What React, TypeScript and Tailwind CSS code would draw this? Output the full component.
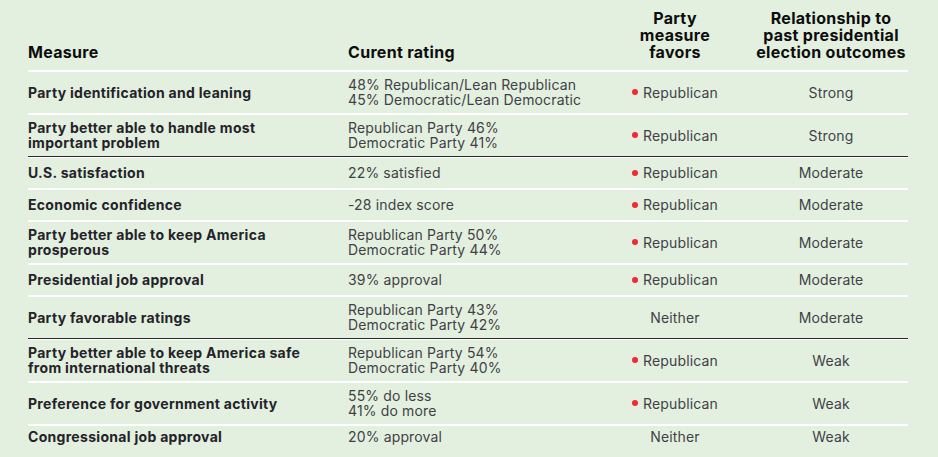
import React from "react";

type Row = {
  measure: string[];
  rating: string[];
  favors: "Republican" | "Neither";
  relation: string;
  divider?: boolean;
};

const rows: Row[] = [
  {
    measure: ["Party identification and leaning"],
    rating: ["48% Republican/Lean Republican", "45% Democratic/Lean Democratic"],
    favors: "Republican",
    relation: "Strong",
  },
  {
    measure: ["Party better able to handle most", "important problem"],
    rating: ["Republican Party 46%", "Democratic Party 41%"],
    favors: "Republican",
    relation: "Strong",
    divider: true,
  },
  {
    measure: ["U.S. satisfaction"],
    rating: ["22% satisfied"],
    favors: "Republican",
    relation: "Moderate",
  },
  {
    measure: ["Economic confidence"],
    rating: ["-28 index score"],
    favors: "Republican",
    relation: "Moderate",
  },
  {
    measure: ["Party better able to keep America", "prosperous"],
    rating: ["Republican Party 50%", "Democratic Party 44%"],
    favors: "Republican",
    relation: "Moderate",
  },
  {
    measure: ["Presidential job approval"],
    rating: ["39% approval"],
    favors: "Republican",
    relation: "Moderate",
  },
  {
    measure: ["Party favorable ratings"],
    rating: ["Republican Party 43%", "Democratic Party 42%"],
    favors: "Neither",
    relation: "Moderate",
    divider: true,
  },
  {
    measure: ["Party better able to keep America safe", "from international threats"],
    rating: ["Republican Party 54%", "Democratic Party 40%"],
    favors: "Republican",
    relation: "Weak",
  },
  {
    measure: ["Preference for government activity"],
    rating: ["55% do less", "41% do more"],
    favors: "Republican",
    relation: "Weak",
  },
  {
    measure: ["Congressional job approval"],
    rating: ["20% approval"],
    favors: "Neither",
    relation: "Weak",
  },
];

const cols = "grid grid-cols-[320px_248px_158px_154px]";

function Lines({ items }: { items: string[] }) {
  return (
    <div className="flex flex-col">
      {items.map((t) => (
        <span key={t} className="block h-[15px]">
          {t}
        </span>
      ))}
    </div>
  );
}

export default function App() {
  return (
    <div
      className="w-[938px] h-[457px] overflow-hidden bg-[#e3f0df] px-[28px]"
      style={{ fontFamily: "Inter, 'Liberation Sans', sans-serif" }}
    >
      <div className="w-[880px]">
        {/* Header */}
        <div className={`${cols} h-[70px] items-end pb-[9px] text-[16px] leading-[17px] font-bold tracking-[0.3px] text-[#0d0d0d]`}>
          <div>Measure</div>
          <div>Curent rating</div>
          <div className="text-center">
            Party
            <br />
            measure
            <br />
            favors
          </div>
          <div className="text-center">
            Relationship to
            <br />
            past presidential
            <br />
            election outcomes
          </div>
        </div>
        <div className="h-[2px] bg-white" />

        {rows.map((r, i) => {
          const last = i === rows.length - 1;
          return (
            <div key={i}>
              <div
                className={`${cols} ${last ? "pt-[3px]" : "min-h-[30px] pt-[5px] pb-[6px]"} items-center text-[14px] leading-[15px]`}
              >
                <div className="font-bold tracking-[0.3px] text-[#25232a]">
                  <Lines items={r.measure} />
                </div>
                <div className="tracking-[0.15px] text-[#423f47]">
                  <Lines items={r.rating} />
                </div>
                <div className="flex items-center justify-center tracking-[0.15px] text-[#423f47]">
                  {r.favors === "Republican" && (
                    <span className="mr-[5px] h-[6px] w-[6px] rounded-full bg-[#ee2a36]" />
                  )}
                  <span>{r.favors}</span>
                </div>
                <div className="text-center tracking-[0.15px] text-[#423f47]">{r.relation}</div>
              </div>
              {!last &&
                (r.divider ? (
                  <div>
                    <div className="h-px bg-[#2b2b2b]" />
                    <div className="h-px bg-white" />
                  </div>
                ) : (
                  <div className="h-[2px] bg-white" />
                ))}
            </div>
          );
        })}
      </div>
    </div>
  );
}
